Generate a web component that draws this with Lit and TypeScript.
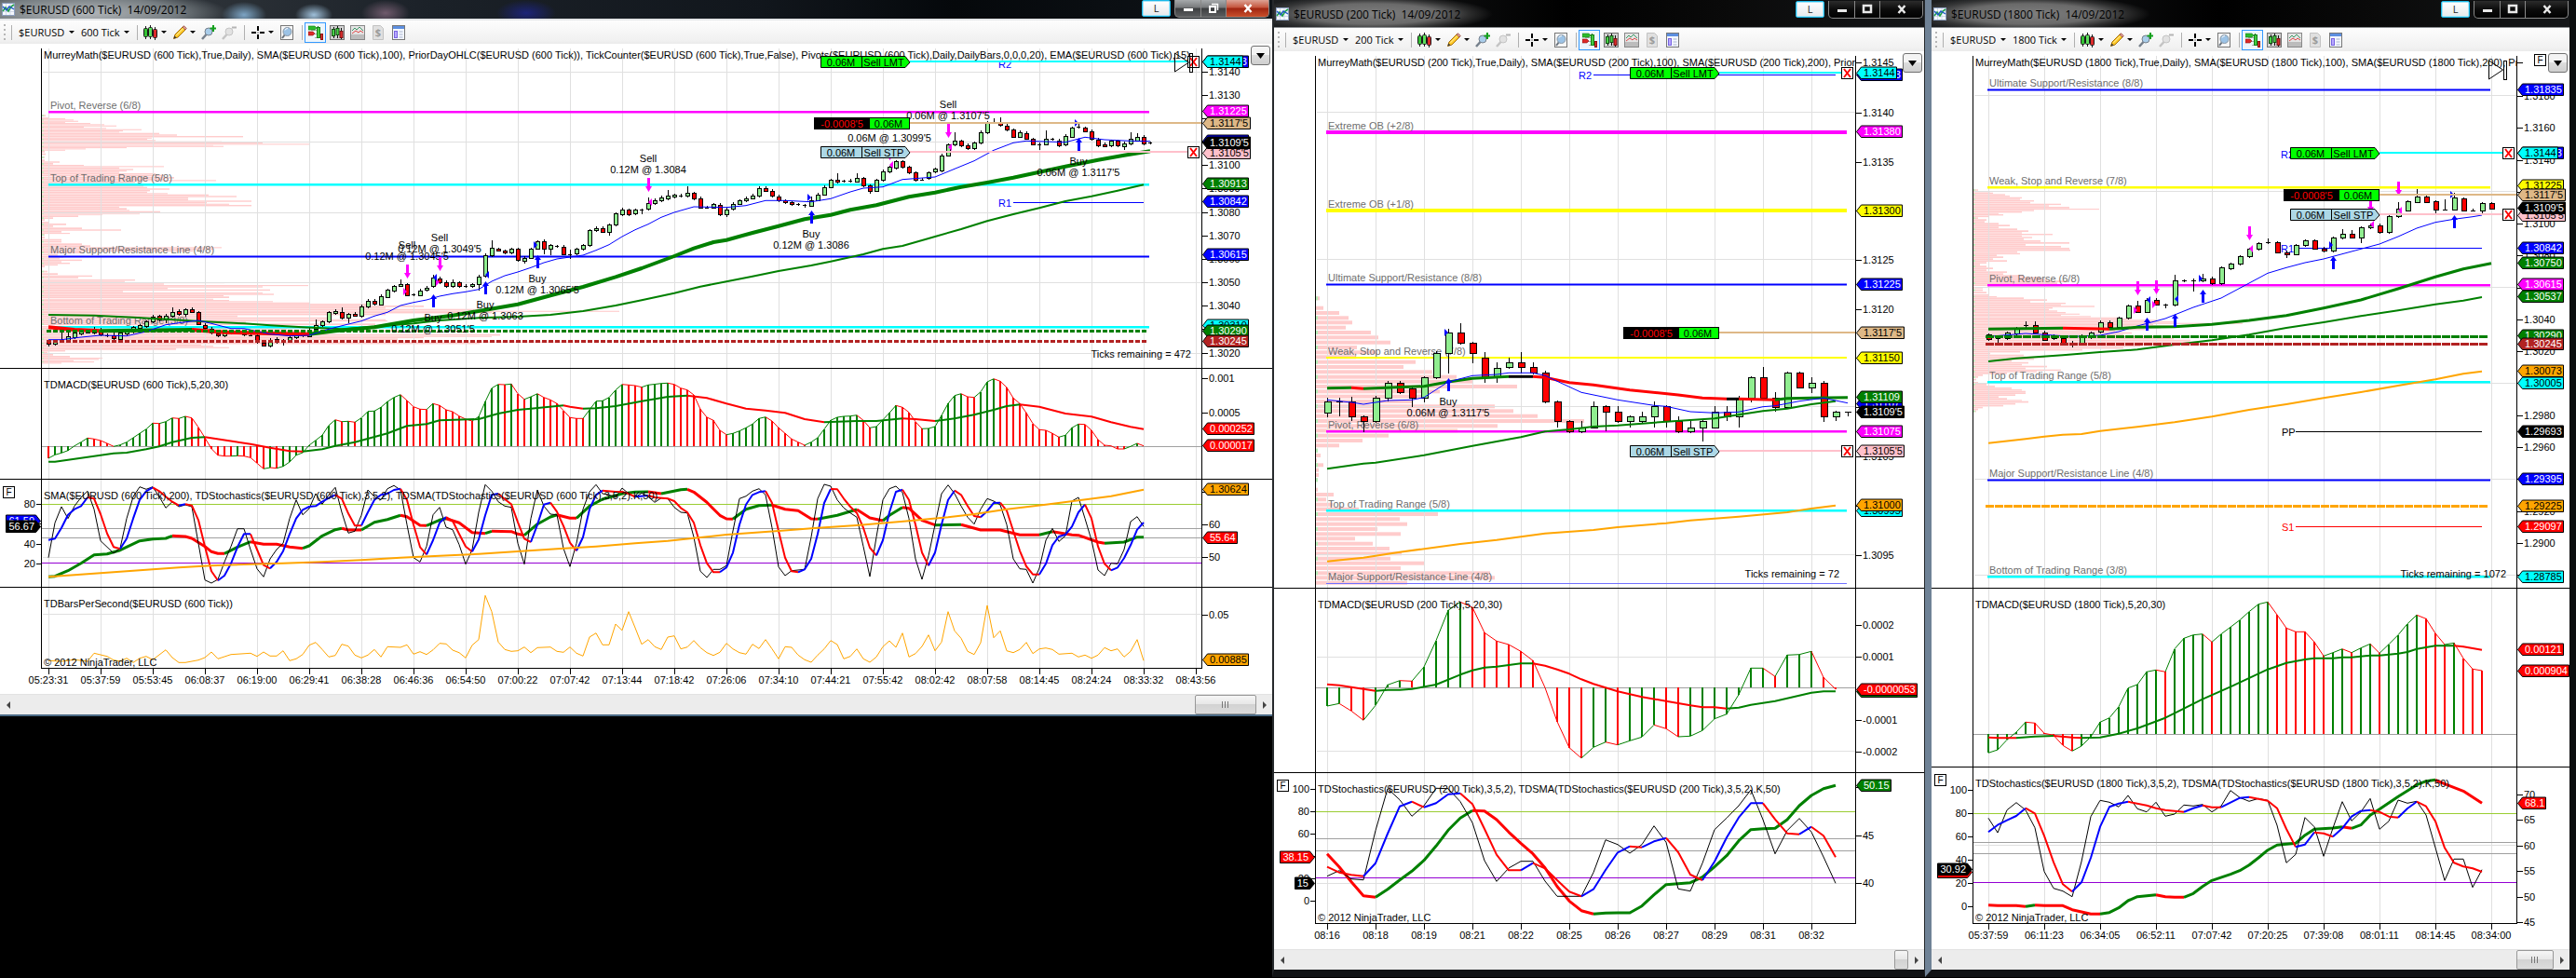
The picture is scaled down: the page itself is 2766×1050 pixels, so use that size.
import { LitElement, html, svg, css, nothing } from "lit";
import { customElement, property } from "lit/decorators.js";

/* Vertical chart data is stored in thirds of a pixel; horizontal data is keyed by bar index. */

type Pair = [number, number];
interface Series { data: string; up: string; down?: string; w: number; off?: number }
interface Level { y: number; color: string; size: number; label?: string; dash?: string }
interface Tag { y: number; text: string; bg: string; fg?: string }
interface Order { y: number; kind: "limit" | "stop" | "position" }
interface Trade { bar: number; y: number; side: "buy" | "sell"; text?: string; head?: boolean }
interface Fill { bar: number; y: number; dir: 1 | -1; color: string }
interface Pivot { y: number; text: string; color: string; x: number; from: number; to: number; drawn?: boolean }
interface Pane {
  top: number;
  bottom: number;
  off: number;
  title: string;
  titleY: number;
  grid: number[];
  ticks: [number, string][];
  leftTicks?: [number, string][];
  tags: Tag[];
  leftTags?: Tag[];
  rules?: { y: number; color: string }[];
  hist?: { zero: number; data: string; first: string };
  series: Series[];
  profile?: { data: string; k: number; x: number; h?: number };
  candles?: { data: string; off: number };
  levels?: Level[];
  levelsOver?: Level[];
  orders?: Order[];
  trades?: Trade[];
  fills?: Fill[];
  pivots?: Pivot[];
  ticksLeft?: { text: string; x: number; y: number };
  marker?: { x: number; y: number };
  badge?: boolean;
  copyright?: number;
}
interface Chart {
  id: string;
  tick: string;
  active: boolean;
  x: number;
  width: number;
  left: number;
  right: number;
  bar0: number;
  step: number;
  body: number;
  gridEvery: number;
  times: string[];
  levelFrom: number;
  levelTo: number;
  orderTip: number;
  thumb: number;
  topBadge?: boolean;
  panes: Pane[];
}

const GREEN = "#008000";
const RED = "#ff0000";
const BLUE = "#0000ff";
const CYAN = "#00ffff";
const MAGENTA = "#ff00ff";
const YELLOW = "#ffff00";
const ORANGE = "#ffa500";
const BROWN = "#b22222";
const TAN = "#deb887";
const PINK = "#ffc0cb";
const GRID = "#e0e0e0";

const pairs = (s: string): Pair[] =>
  s.trim().split(/\s+/).map((t) => t.split(":").map(Number) as Pair);

const textWidth = (s: string) =>
  [...s].reduce((w, c) => w + (c === "." ? 3.06 : c === "'" ? 2.1 : c === "-" ? 3.66 : 6.12), 0);

/* ---------------------------------------------------------------- data */

const chart600: Chart = {
  id: "w600", tick: "600 Tick", active: true,
  x: 0, width: 1366, left: 44, right: 1290, bar0: 52, step: 7, body: 4, gridEvery: 8,
  times: ["05:23:31", "05:37:59", "05:53:45", "06:08:37", "06:19:00", "06:29:41", "06:38:28", "06:46:36", "06:54:50", "07:00:22", "07:07:42", "07:13:44", "07:18:42", "07:26:06", "07:34:10", "07:44:21", "07:55:42", "08:02:42", "08:07:58", "08:14:45", "08:24:24", "08:33:32", "08:43:56"],
  levelFrom: 52, levelTo: 1234, orderTip: 977, thumb: 66,
  panes: [
    {
      top: 47, bottom: 395, off: 0, titleY: 178,
      title: "MurreyMath($EURUSD (600 Tick),True,Daily), SMA($EURUSD (600 Tick),100), PriorDayOHLC($EURUSD (600 Tick)), TickCounter($EURUSD (600 Tick),True,False), Pivots($EURUSD (600 Tick),Daily,DailyBars,0,0,0,20), EMA($EURUSD (600 Tick),15)",
      grid: [230, 455, 683, 908, 1136],
      ticks: [[231, "1.3140"], [306, "1.3130"], [381, "1.3120"], [456, "1.3110"], [531, "1.3100"], [607, "1.3090"], [684, "1.3080"], [758, "1.3070"], [833, "1.3060"], [908, "1.3050"], [983, "1.3040"], [1060, "1.3030"], [1137, "1.3020"]],
      tags: [
        { y: 199, text: "1.31443", bg: BLUE, fg: "#fff" }, { y: 199, text: "1.3144", bg: CYAN },
        { y: 358, text: "1.31225", bg: MAGENTA, fg: "#fff" }, { y: 397, text: "1.3117'5", bg: TAN },
        { y: 491, text: "1.3105'5", bg: PINK }, { y: 454, text: "1.31105", bg: BLUE, fg: "#fff" },
        { y: 460, text: "1.3109'5", bg: "#000", fg: "#fff" }, { y: 592, text: "1.30913", bg: GREEN, fg: "#fff" },
        { y: 647, text: "1.30842", bg: BLUE, fg: "#fff" }, { y: 819, text: "1.30615", bg: BLUE, fg: "#fff" },
        { y: 1048, text: "1.30310", bg: CYAN }, { y: 1065, text: "1.30290", bg: GREEN, fg: "#fff" },
        { y: 1098, text: "1.30245", bg: BROWN, fg: "#fff" },
      ],
      profile: {
        k: 2.2725, x: 0,
        data: "370:112 378:119 381:158 385:180 389:190 393:158 396:220 400:255 404:283 408:205 412:258 416:346 420:300 424:290 428:388 433:432 438:594 443:370 447:360 451:380 455:540 459:640 463:757 467:520 470:545 474:310 478:210 482:158 486:108 494:112 504:110 514:108 520:145 525:130 531:205 535:400 539:290 544:325 549:310 553:290 558:380 563:400 570:425 576:400 580:527 584:330 590:325 596:350 602:360 607:413 612:365 617:360 622:408 626:510 631:578 636:458 641:460 646:613 651:505 656:560 660:613 665:290 670:310 676:316 680:392 685:300 688:340 691:250 694:192 700:130 706:110 714:120 720:162 726:130 733:200 739:295 744:150 750:170 754:110 762:108 770:150 776:150 784:200 790:220 796:540 800:520 806:470 811:200 818:140 825:155 832:145 836:200 841:150 846:170 851:140 856:110 872:115 880:140 887:225 892:190 900:330 905:305 909:548 913:400 918:753 922:640 927:410 932:658 937:300 942:640 946:668 951:545 955:560 962:520 966:560 970:665 974:755 978:905 984:1033 990:940 995:1185 1001:1511 1005:1200 1010:940 1016:580 1022:800 1028:940 1032:945 1036:600 1042:915 1050:700 1056:900 1060:700 1064:1030 1070:720 1076:1220 1082:1200 1086:1035 1090:970 1096:640 1100:1400 1104:1170 1109:490 1113:520 1118:560 1122:430 1128:160 1133:115 1140:130 1146:170 1152:250 1156:240 1160:180 1164:230 1168:150 1172:102",
      },
      levels: [
        { y: 361, color: MAGENTA, size: 3, label: "Pivot, Reverse (6/8)" },
        { y: 593, color: CYAN, size: 3, label: "Top of Trading Range (5/8)" },
        { y: 824, color: BLUE, size: 3, label: "Major Support/Resistance Line (4/8)" },
        { y: 1052, color: CYAN, size: 3, label: "Bottom of Trading Range (3/8)" },
      ],
      levelsOver: [
        { y: 1066, color: GREEN, size: 3, dash: "5 2" },
        { y: 1099, color: BROWN, size: 3, dash: "5 2" },
      ],
      candles: {
        off: 0,
        data: `r1098-1108^1094_1116 g1102-1108 d1097^1070_1098 g1084-1094^1070 g1072-1086 g1066-1074 g1064-1070 g1060-1072^1052 r1062-1078^1055 d1080 r1080-1090^1070 g1072-1092 g1068-1074 g1054-1068 g1048-1056 g1036-1050 g1020-1036 r1018-1030 g1018-1030^1010_1040 g1004-1018^990 r1002-1012 g996-1012^993_1020 r997-1004^990 r1006-1043 r1046-1056 r1058-1072 r1074-1080 g1072-1080 g1066-1072 d1066 r1068-1078 d1079 r1080-1102 r1104-1112 g1094-1112_1118 r1092-1102 d1102^1092_1114 g1086-1096_1100 g1078-1086 g1074-1080 g1062-1082 g1048-1060^1030 g1036-1048 g1006-1036 g1002-1008 r1004-1024^990 g1012-1024_1040 r1010-1016 g986-1018^980 g968-988^962 r968-978 g954-980 g934-956 g922-936 g916-920^900 r916-950 d949 g936-950 g926-934 g894-922^886 r896-910 r908-922 g908-922^900 r910-922 d921 g916-921 g890-916_935 g822-888 g798-822^774 r802-806 r808-814 g802-814 r802-838 g830-840_850 g802-830 g778-800 r778-802^772_818 g790-802_822 d793 r794-818 d818^805_834 g802-816 g790-802 g742-790 g734-742 r734-746 g724-746_760 g688-724 g676-690^668 r676-690 g676-688 d676^672_690 g654-672^636 g644-654 g636-646 g630-640^612 g628-634 d630 g622-630^600 r622-640 r638-668 d668 g658-668 r660-690 g674-690_698 g656-672 g646-656 g638-646 g630-638 g606-630 r606-614 r614-630 r632-646 r646-652 r652-658 d658 d660^656_670 g644-662^634 g626-644 g602-626 g580-602 r580-586^558 d583 d582 g574-584^558 r574-598 r598-614_624 g580-614 g552-580 g538-552 g520-540 r520-538 r538-556 r556-580 d578 g556-574 g544-552 g500-550 g466-500 g454-466^426 r454-468 r468-478 g460-478 g426-460 g396-426 d392^380 r392-402^378 r404-418 r418-440 g426-440 r428-446 r448-464 d464^460_484 g448-464^420 d448 r452-468_474 g438-466 g412-440 d408^392 r412-422 r422-448 r450-468 r464-470 g454-468 r454-468 g462-470_482 g448-462^426 g440-452^428 r440-462 d460`,
      },
      series: [
        { up: GREEN, w: 2, data: "0:1014 7:1016 13:1022 18:1028 24:1036 30:1042 34:1048 39:1054 45:1060 50:1052 56:1042 60:1032 66:1024 72:1020 77:1014 82:1002 87:984 91:967 96:944 100:923 104:907 108:890 112:873 117:855 120:842 125:819 128:802 131:792 136:762 140:738 144:712 148:690 152:670 156:648 160:632 164:614 168:595" },
        { up: GREEN, down: RED, w: 4, data: "0:1054 4:1062 8:1066 14:1064 22:1062 27:1070 34:1074 40:1076 44:1066 50:1054 56:1032 62:1016 67:998 72:980 77:952 82:924 87:892 91:864 96:825 99:800 102:780 104:773 108:750 112:728 116:706 120:692 123:676 127:661 132:634 136:620 140:602 144:588 148:572 152:554 156:536 161:515 165:500 169:487" },
        { up: BLUE, w: 1, data: "0:1094 2:1094 5:1086 8:1080 12:1082 15:1068 18:1046 20:1040 23:1032 25:1042 28:1058 30:1058 34:1076 37:1082 40:1080 43:1060 46:1044 48:1034 50:1018 52:1006 54:984 56:974 58:966 60:954 62:946 64:940 66:932 68:906 70:888 72:876 74:862 76:846 78:834 80:828 82:822 84:806 86:788 88:762 90:740 92:722 94:700 96:684 99:666 104:668 107:662 110:646 113:646 117:650 120:640 123:618 125:606 128:602 131:578 136:570 139:544 142:518 145:484 148:460 150:454 153:456 156:458 159:442 162:450 166:454 169:455" },
      ],
      pivots: [
        { y: 205, text: "R2", color: BLUE, x: 1072, from: 1089, to: 1228, drawn: false },
        { y: 650, text: "R1", color: BLUE, x: 1072, from: 1088, to: 1228 },
      ],
      orders: [{ y: 199, kind: "limit" }, { y: 396, kind: "position" }, { y: 489, kind: "stop" }],
      trades: [
        { bar: 55, y: 853, side: "sell", text: "0.12M @ 1.3045'5" },
        { bar: 60, y: 829, side: "sell", text: "0.12M @ 1.3049'5" },
        { bar: 92, y: 574, side: "sell", text: "0.12M @ 1.3084" },
        { bar: 138, y: 400, side: "sell", text: "0.06M @ 1.3107'5" },
        { bar: 129, y: 471, side: "sell", text: "0.06M @ 1.3099'5", head: false },
        { bar: 59, y: 948, side: "buy", text: "0.12M @ 1.3051'5" },
        { bar: 67, y: 906, side: "buy", text: "0.12M @ 1.3063" },
        { bar: 75, y: 822, side: "buy", text: "0.12M @ 1.3065'5" },
        { bar: 117, y: 678, side: "buy", text: "0.12M @ 1.3086" },
        { bar: 158, y: 444, side: "buy", text: "0.06M @ 1.3117'5" },
      ],
      fills: [
        { bar: 55, y: 940, dir: 1, color: MAGENTA }, { bar: 60, y: 908, dir: 1, color: MAGENTA },
        { bar: 59, y: 893, dir: -1, color: BLUE }, { bar: 67, y: 886, dir: -1, color: BLUE },
        { bar: 75, y: 790, dir: 1, color: BLUE }, { bar: 92, y: 652, dir: -1, color: MAGENTA },
        { bar: 117, y: 637, dir: 1, color: BLUE }, { bar: 129, y: 532, dir: -1, color: MAGENTA },
        { bar: 138, y: 474, dir: -1, color: MAGENTA }, { bar: 158, y: 397, dir: 1, color: BLUE },
      ],
      marker: { x: 1261, y: 57 },
      ticksLeft: { text: "Ticks remaining = 472", x: 1279, y: 1141 },
    },
    {
      top: 395, bottom: 514, off: 1170, titleY: 70, title: "TDMACD($EURUSD (600 Tick),5,20,30)",
      grid: [], ticks: [[48, "0.001"], [158, "0.0005"]],
      tags: [{ y: 211, text: "0.000252", bg: RED, fg: "#fff" }, { y: 265, text: "0.000017", bg: RED, fg: "#fff" }],
      rules: [{ y: 268, color: "#a0a0a0" }],
      hist: {
        zero: 268, first: RED,
        data: "0:306 1:295 2:289 3:281 4:266 5:254 6:241 7:244 8:249 9:258 10:268 11:263 12:254 13:240 14:226 15:212 16:193 17:194 18:188 19:176 20:178 21:171 22:176 23:206 24:240 25:275 26:296 27:299 28:299 29:298 30:299 31:304 32:322 33:340 34:336 35:338 36:332 37:318 38:296 39:288 40:264 41:248 42:232 43:200 44:182 45:188 46:187 47:190 48:176 49:155 50:154 51:142 52:124 53:110 54:101 55:120 56:140 57:148 58:149 59:130 60:136 61:150 62:156 63:170 64:180 65:186 66:172 67:124 68:80 69:68 70:69 71:67 72:98 73:116 74:108 75:98 76:110 77:118 78:130 79:152 80:175 81:178 82:178 83:150 84:122 85:121 86:110 87:86 88:68 90:72 91:77 92:70 94:65 95:64 96:68 97:80 98:86 99:102 100:148 101:174 102:184 103:216 104:230 105:226 106:218 107:208 108:196 109:178 110:173 111:186 112:208 113:226 114:244 115:254 116:264 117:254 118:240 119:212 120:184 121:174 122:171 123:170 124:167 125:184 126:208 127:204 128:182 129:160 130:136 131:142 132:158 133:188 134:211 135:210 136:204 137:168 138:130 139:104 140:98 141:108 142:110 143:92 144:60 145:50 146:58 147:78 148:112 149:130 150:160 151:194 152:214 153:216 154:226 155:238 156:232 157:208 158:196 159:197 160:216 161:246 162:264 163:266 164:276 165:276 166:268 167:258 168:266",
      },
      series: [{ up: GREEN, down: RED, w: 2, data: "0:317 1:317 10:290 12:288 15:277 17:268 19:254 22:240 24:238 31:260 34:272 37:283 39:284 42:277 44:266 47:254 52:226 55:202 58:196 60:184 66:180 69:162 72:150 74:146 79:136 80:140 82:146 84:145 87:138 91:122 95:108 98:104 101:112 104:130 107:146 110:152 113:160 116:180 119:190 124:186 127:186 131:178 133:180 136:186 139:178 142:166 145:150 147:138 149:133 152:140 156:162 160:172 163:190 166:205 168:212" }],
    },
    {
      top: 514, bottom: 630, off: 1170, titleY: 427,
      title: "SMA($EURUSD (600 Tick),200), TDStochastics($EURUSD (600 Tick),3,5,2), TDSMA(TDStochastics($EURUSD (600 Tick),3,5,2).K,50)",
      grid: [623], ticks: [[413, ""], [518, "60"], [623, "50"]],
      leftTicks: [[452, "80"], [516, ""], [581, "40"], [645, "20"]],
      tags: [{ y: 405, text: "1.30624", bg: ORANGE }, { y: 561, text: "55.64", bg: RED, fg: "#fff" }],
      leftTags: [{ y: 508, text: "61.59", bg: BLUE, fg: "#fff" }, { y: 526, text: "56.67", bg: "#000", fg: "#fff" }],
      rules: [{ y: 452, color: "#9acd32" }, { y: 532, color: "#a0a0a0" }, { y: 562, color: "#a0a0a0" }, { y: 643, color: "#9400d3" }],
      series: [
        { up: GREEN, down: RED, w: 3, data: "0:688 1:686 3:668 5:644 7:617 9:614 11:602 14:572 16:566 18:564 19:556 21:558 22:564 24:590 25:607 26:613 27:613 29:592 31:575 33:583 35:583 37:592 39:596 40:588 42:556 44:536 45:532 46:537 48:537 50:512 52:503 54:490 55:494 57:522 58:523 60:505 61:500 63:514 65:545 67:548 68:541 71:542 72:550 73:554 75:518 77:495 78:488 80:499 81:499 83:460 85:438 88:420 90:415 92:414 94:420 97:407 98:406 99:415 101:448 103:490 104:501 105:502 107:470 109:458 111:457 113:470 115:475 117:501 118:502 121:490 124:471 126:498 128:507 129:490 131:464 132:467 134:506 136:521 140:520 143:537 146:537 149:553 152:553 154:542 157:553 158:554 161:576 162:580 165:576 167:560 168:560" },
        { up: "#000", w: 1, data: "0:626 1:514 2:462 3:500 4:460 5:432 6:412 7:470 8:572 9:592 10:612 11:596 12:500 13:430 14:398 15:406 16:398 17:430 18:466 19:446 20:462 21:456 22:462 23:580 24:698 25:708 26:696 27:640 28:590 29:533 30:533 31:600 32:662 33:688 34:630 35:600 36:580 37:500 38:440 39:488 40:468 41:420 42:454 43:424 44:400 45:480 46:547 47:541 48:490 49:408 50:430 51:440 52:404 53:394 54:408 55:520 56:626 57:640 58:590 59:488 60:464 61:528 62:536 63:584 64:647 65:600 66:480 67:391 68:412 69:446 70:460 71:464 72:580 73:647 74:500 75:408 76:460 77:486 78:488 79:596 80:655 81:580 82:470 83:414 84:391 85:420 86:424 87:432 88:402 89:420 90:432 91:418 92:430 93:448 94:434 95:436 96:464 97:480 98:482 99:560 100:670 101:690 102:664 103:664 104:652 105:540 106:436 107:428 108:412 109:404 110:424 111:530 112:656 113:684 114:668 115:666 116:664 117:560 118:436 119:390 120:396 121:440 122:466 123:482 124:496 125:590 126:687 127:560 128:440 129:404 130:396 131:416 132:500 133:630 134:696 135:620 136:520 137:420 138:392 139:420 140:460 141:496 142:518 143:470 144:436 145:444 146:456 147:520 148:630 149:662 150:664 151:708 152:660 153:570 154:532 155:574 156:556 157:444 158:432 159:500 160:570 161:666 162:684 163:644 164:646 165:600 166:510 167:494 168:526" },
        { up: BLUE, down: RED, w: 2, data: "0:569 1:565 2:530 3:488 4:470 5:460 6:432 7:436 8:486 9:548 10:592 11:598 12:565 13:500 14:440 15:412 16:400 17:412 18:430 19:446 20:458 21:454 22:458 23:505 24:590 25:670 26:700 27:684 28:645 29:592 30:550 31:550 32:600 33:650 34:661 35:640 36:605 37:550 38:500 39:472 40:462 41:460 42:446 43:434 44:424 45:436 46:484 47:523 48:523 49:480 50:440 51:424 52:420 53:408 54:404 55:440 56:520 57:592 58:616 59:570 60:514 61:495 62:508 63:550 64:590 65:607 66:568 67:490 68:424 69:420 70:438 71:454 72:512 73:565 74:576 75:520 76:455 77:449 78:478 79:524 80:578 81:604 82:560 83:470 84:424 85:410 87:414 88:414 89:420 90:430 92:426 93:432 95:436 96:444 97:466 98:480 99:514 100:586 101:644 102:673 103:673 104:658 105:610 106:520 107:455 108:424 109:415 110:412 111:450 112:540 113:626 114:670 115:673 116:664 117:630 118:550 119:450 120:405 121:406 122:436 123:462 124:482 125:530 126:594 127:619 128:570 129:480 130:414 131:407 132:440 133:520 134:610 135:652 136:610 137:520 138:440 139:410 140:424 141:460 142:492 143:496 144:476 145:450 146:449 147:475 148:540 149:604 150:654 151:680 152:680 153:646 154:586 155:558 156:552 157:526 158:480 159:455 160:500 161:590 162:646 163:667 164:658 165:628 166:586 167:536 168:513" },
        { up: ORANGE, w: 2, data: "0:688 5:680 10:673 15:665 20:658 25:652 30:648 36:644 42:640 48:634 54:626 60:620 66:614 72:606 78:598 84:590 90:580 95:572 104:552 112:540 118:530 124:522 132:508 138:496 142:486 147:470 153:455 158:442 163:428 168:407" },
      ],
      badge: true,
    },
    {
      top: 630, bottom: 717, off: 1170, titleY: 775, title: "TDBarsPerSecond($EURUSD (600 Tick))",
      grid: [808], ticks: [[810, "0.05"]], tags: [{ y: 954, text: "0.00885", bg: ORANGE }],
      series: [{ up: ORANGE, w: 1, data: "0:958 2:960 4:955 6:960 7:934 9:944 10:956 11:960 12:950 13:964 14:950 15:944 16:955 18:923 19:948 20:964 21:964 23:956 24:948 25:930 26:952 28:938 31:934 32:944 33:930 34:943 35:943 36:926 37:958 38:952 39:938 40:908 41:899 42:922 43:946 44:941 45:905 46:911 47:940 48:949 49:940 50:922 51:946 52:913 54:915 55:907 56:937 57:929 58:938 59:923 60:902 61:904 62:924 63:932 64:949 65:908 66:890 67:748 68:800 69:898 70:922 71:928 72:926 73:914 74:932 75:916 77:914 78:928 79:931 80:914 81:934 82:943 83:882 84:869 85:907 86:907 87:840 88:860 89:800 90:852 91:905 92:890 93:913 94:922 95:882 96:878 97:920 98:914 99:893 100:916 101:932 102:941 103:931 104:902 105:920 106:932 107:937 108:905 109:919 110:890 111:920 112:952 113:913 114:915 115:940 116:955 117:963 118:940 119:920 120:893 121:906 122:952 123:944 124:920 125:952 126:963 127:946 128:913 129:894 130:915 131:869 132:946 133:935 134:912 135:875 136:926 137:898 138:800 139:862 140:886 141:928 142:938 143:900 144:780 145:884 146:862 147:926 148:932 149:922 150:899 151:935 152:920 153:917 154:922 155:937 157:934 158:946 159:940 160:950 161:940 162:916 163:926 164:920 165:946 166:928 167:890 168:958" }],
      copyright: 964,
    },
  ],
};

const chart200: Chart = {
  id: "w200", tick: "200 Tick", active: false,
  x: 1368, width: 698, left: 1412, right: 1992, bar0: 1425, step: 13, body: 7, gridEvery: 4,
  times: ["08:16", "08:18", "08:19", "08:21", "08:22", "08:25", "08:26", "08:27", "08:29", "08:31", "08:32"],
  levelFrom: 1424, levelTo: 1983, orderTip: 1846, thumb: 15,
  panes: [
    {
      top: 55, bottom: 631, off: 0, titleY: 202,
      title: "MurreyMath($EURUSD (200 Tick),True,Daily), SMA($EURUSD (200 Tick),100), SMA($EURUSD (200 Tick),200), PriorDayOHLC($EURUSD (200 Tick))",
      grid: [361, 835, 1309, 1786],
      ticks: [[202, "1.3145"], [363, "1.3140"], [521, "1.3135"], [679, "1.3130"], [837, "1.3125"], [995, "1.3120"], [1153, "1.3115"], [1311, "1.3110"], [1470, "1.3105"], [1628, "1.3100"], [1787, "1.3095"]],
      tags: [
        { y: 241, text: "1.31443", bg: BLUE, fg: "#fff" }, { y: 235, text: "1.3144", bg: CYAN },
        { y: 423, text: "1.31380", bg: MAGENTA, fg: "#fff" }, { y: 678, text: "1.31300", bg: YELLOW },
        { y: 915, text: "1.31225", bg: BLUE, fg: "#fff" }, { y: 1071, text: "1.3117'5", bg: TAN },
        { y: 1152, text: "1.31150", bg: YELLOW }, { y: 1298, text: "1.31107", bg: BLUE, fg: "#fff" },
        { y: 1279, text: "1.31109", bg: GREEN, fg: "#fff" }, { y: 1326, text: "1.3109'5", bg: "#000", fg: "#fff" },
        { y: 1389, text: "1.31075", bg: MAGENTA, fg: "#fff" }, { y: 1453, text: "1.3105'5", bg: PINK },
        { y: 1643, text: "1.30995", bg: CYAN }, { y: 1626, text: "1.31000", bg: ORANGE },
      ],
      profile: {
        k: 2.221, x: 1366, h: 12,
        data: "955:113 986:122 1002:160 1018:182 1033:191 1049:175 1065:235 1081:253 1097:282 1113:202 1129:250 1144:200 1160:342 1176:313 1192:382 1208:440 1223:480 1239:584 1255:400 1271:370 1287:335 1303:530 1318:575 1334:632 1350:744 1366:537 1381:441 1397:278 1413:215 1429:160 1445:108 1461:115 1477:107 1492:122 1508:112 1524:111 1540:109 1571:109 1587:147 1603:129 1619:145 1634:207 1650:395 1666:304 1682:322 1698:251 1714:306 1729:198 1745:240 1761:280 1777:309 1793:282 1808:362 1824:306 1840:520 1855:530 1871:322 1887:103",
      },
      levels: [
        { y: 427, color: MAGENTA, size: 4, label: "Extreme OB (+2/8)" },
        { y: 679, color: YELLOW, size: 4, label: "Extreme OB (+1/8)" },
        { y: 916, color: BLUE, size: 3, label: "Ultimate Support/Resistance (8/8)" },
        { y: 1153, color: YELLOW, size: 2, label: "Weak, Stop and Reverse (7/8)" },
        { y: 1390, color: MAGENTA, size: 3, label: "Pivot, Reverse (6/8)" },
        { y: 1645, color: CYAN, size: 3, label: "Top of Trading Range (5/8)" },
        { y: 1879, color: "#7070ff", size: 1, label: "Major Support/Resistance Line (4/8)" },
      ],
      candles: {
        off: 1170,
        data: `g124-158^110_174 d124^110_172 r124-172^108_186 r172-187_222 g110-187 g62-110_124 r62-94 r80-110_140 g46-110_126 g-34-46 g-98--34^-110_32 r-98--65^-130 r-65--34_0 r-17-46^-36_62 g14-46^-2_62 g-2-13^-18 r-2-13^-36_32 r13-30^-2 r30-124 r124-187_206 r187-220 g206-220^187 g139-206^124 r139-157_220 r157-187^139 g172-187_206 g172-187^157 g139-172^124_206 r139-187_206 r187-220^172 g206-220^187 g187-206_252 g157-206^139 r157-172^139_187 g110-172_206 g46-110_126 r46-110^12 r110-140^94_157 g31-140 r31-77 g62-77^46_95 r62-172_188 g157-172_187 d157^155_172`,
      },
      series: [
        { off: 1170, up: GREEN, down: RED, w: 3, data: "0:80 2:79 3:82 8:74 10:60 12:49 15:43" },
        { off: 1170, up: "#000", w: 3, data: "15:43 17:43" },
        { off: 1170, up: RED, w: 3, data: "17:43 18:46 20:62 22:70 25:86 29:102 31:112 33:115" },
        { off: 1170, up: "#000", w: 3, data: "33:115 34:115" },
        { off: 1170, up: RED, w: 3, data: "34:115 37:118" },
        { off: 1170, up: GREEN, w: 3, data: "37:118 38:113 40:112 43:110" },
        { off: 1170, up: GREEN, w: 2, data: "0:340 3:323 4:320 8:296 12:266 16:238 18:220 20:213 22:204 24:200 28:188 32:178 36:154 38:146 40:132 42:122" },
        { off: 1170, up: BLUE, w: 1, data: "0:118 2:126 3:132 5:120 7:118 8:110 10:60 12:40 14:36 15:31 17:31 18:40 20:76 21:94 24:118 27:136 28:139 30:156 32:160 34:157 36:140 37:137 39:122 41:112 42:120 43:128" },
        { off: 1170, up: ORANGE, w: 2, data: "0:638 3:626 6:608 11:582 14:569 18:548 22:537 24:528 28:515 30:506 34:494 38:480 40:468 42:458" },
      ],
      pivots: [{ y: 241, text: "R2", color: BLUE, x: 1695, from: 1711, to: 1971 }],
      orders: [{ y: 235, kind: "limit" }, { y: 1072, kind: "position" }, { y: 1452, kind: "stop" }],
      trades: [{ bar: 10, y: 1218, side: "buy", text: "0.06M @ 1.3117'5" }],
      fills: [{ bar: 10, y: 1072, dir: 1, color: BLUE }],
      ticksLeft: { text: "Ticks remaining = 72", x: 1975, y: 1849 },
    },
    {
      top: 631, bottom: 829, off: 1860, titleY: 88, title: "TDMACD($EURUSD (200 Tick),5,20,30)",
      grid: [254, 559], ticks: [[153, "0.0002"], [254, "0.0001"], [459, "-0.0001"], [560, "-0.0002"]],
      tags: [{ y: 366, text: "-0.0000053", bg: GREEN }, { y: 360, text: "-0.0000053", bg: RED, fg: "#fff" }],
      rules: [{ y: 355, color: "#a0a0a0" }],
      hist: {
        zero: 355, first: GREEN,
        data: "0:414 1:406 2:430 3:460 4:412 5:346 6:332 7:334 8:288 9:203 10:106 11:79 12:96 13:178 14:205 15:216 16:238 17:268 18:355 19:464 20:548 21:582 22:547 23:530 24:539 25:526 26:514 27:475 28:487 29:513 30:511 31:493 32:455 33:440 34:377 35:292 36:292 37:319 38:250 39:248 40:238 41:322 42:360",
      },
      series: [{ up: GREEN, down: RED, w: 2, data: "0:344 1:347 3:359 4:365 5:362 6:362 7:359 9:345 11:313 12:299 13:290 14:287 16:277 17:277 18:284 19:296 20:310 21:328 22:343 24:367 26:385 28:398 30:412 31:418 32:418 33:422 34:419 35:410 37:398 39:380 40:371 41:367 42:367" }],
    },
    {
      top: 829, bottom: 991, off: 1860, titleY: 682,
      title: "TDStochastics($EURUSD (200 Tick),3,5,2), TDSMA(TDStochastics($EURUSD (200 Tick),3,5,2).K,50)",
      grid: [983], ticks: [[676, ""], [830, "45"], [984, "40"]],
      leftTicks: [[681, "100"], [752, "80"], [825, "60"], [896, "40"], [968, "20"], [1041, "0"]],
      tags: [{ y: 669, text: "50.15", bg: GREEN, fg: "#fff" }],
      leftTags: [{ y: 900, text: "38.15", bg: RED, fg: "#fff" }, { y: 985, text: "15", bg: "#000", fg: "#fff" }],
      rules: [{ y: 752, color: "#9acd32" }, { y: 841, color: "#a0a0a0" }, { y: 878, color: "#a0a0a0" }, { y: 967, color: "#9400d3" }],
      series: [
        { up: GREEN, down: RED, w: 3, data: "0:890 1:932 2:980 3:1025 4:1030 5:1004 6:974 7:946 8:911 9:865 10:814 11:775 12:751 13:752 14:780 15:820 16:856 17:890 18:935 19:995 20:1042 21:1073 22:1084 23:1081 24:1080 25:1080 26:1058 27:1022 28:989 29:986 30:983 31:965 32:932 33:896 34:848 35:812 36:809 37:808 38:780 39:735 40:702 41:680 42:670" },
        { up: "#000", w: 1, data: "0:962 1:944 2:971 3:974 4:815 5:680 6:716 7:769 8:735 9:679 10:680 11:722 12:790 13:912 14:979 15:936 16:914 17:914 18:978 19:1027 20:1027 21:1027 22:950 23:845 24:860 25:888 26:860 27:800 28:853 29:1003 30:1010 31:920 32:812 33:775 34:735 35:684 36:780 37:890 38:815 39:776 40:820 41:900 42:985" },
        { up: BLUE, down: RED, w: 2, data: "0:932 1:950 2:958 3:962 4:920 5:825 6:737 7:722 8:740 9:727 10:698 11:695 12:730 13:810 14:893 15:943 16:943 17:920 18:937 19:975 20:1012 21:1027 22:1004 23:942 24:886 25:866 26:869 27:850 28:839 29:885 30:957 31:975 32:915 33:838 34:773 35:727 36:727 37:779 38:824 39:827 40:803 41:832 42:901" },
      ],
      badge: true, copyright: 1096,
    },
  ],
};

const chart1800: Chart = {
  id: "w1800", tick: "1800 Tick", active: false,
  x: 2074, width: 685, left: 2118, right: 2702, bar0: 2135, step: 10, body: 5, gridEvery: 6,
  times: ["05:37:59", "06:11:23", "06:34:05", "06:52:11", "07:07:42", "07:20:25", "07:39:08", "08:01:11", "08:14:45", "08:34:00"],
  levelFrom: 2134, levelTo: 2674, orderTip: 2555, thumb: 40, topBadge: true,
  panes: [
    {
      top: 55, bottom: 631, off: 0, titleY: 202,
      title: "MurreyMath($EURUSD (1800 Tick),True,Daily), SMA($EURUSD (1800 Tick),100), SMA($EURUSD (1800 Tick),200), PriorDayOHLC($EURUSD (1800 Tick))",
      grid: [307, 616, 925, 1234, 1541, 1850],
      ticks: [[202, ""], [310, "1.3180"], [411, "1.3160"], [515, "1.3140"], [617, "1.3120"], [721, "1.3100"], [822, "1.3080"], [926, "1.3060"], [1030, "1.3040"], [1132, "1.3020"], [1234, "1.3000"], [1337, "1.2980"], [1440, "1.2960"], [1542, "1.2940"], [1647, "1.2920"], [1749, "1.2900"], [1851, "1.2880"]],
      tags: [
        { y: 288, text: "1.31835", bg: BLUE, fg: "#fff" }, { y: 493, text: "1.31443", bg: BLUE, fg: "#fff" },
        { y: 492, text: "1.3144", bg: CYAN }, { y: 598, text: "1.31225", bg: YELLOW },
        { y: 627, text: "1.3117'5", bg: TAN }, { y: 692, text: "1.3105'5", bg: PINK },
        { y: 669, text: "1.3109'5", bg: "#000", fg: "#fff" }, { y: 798, text: "1.30842", bg: BLUE, fg: "#fff" },
        { y: 847, text: "1.30750", bg: GREEN, fg: "#fff" }, { y: 915, text: "1.30615", bg: MAGENTA, fg: "#fff" },
        { y: 953, text: "1.30537", bg: GREEN, fg: "#fff" }, { y: 1080, text: "1.30290", bg: GREEN, fg: "#fff" },
        { y: 1107, text: "1.30245", bg: BROWN, fg: "#fff" }, { y: 1194, text: "1.30073", bg: ORANGE },
        { y: 1232, text: "1.30005", bg: CYAN }, { y: 1389, text: "1.29693", bg: "#000", fg: "#fff" },
        { y: 1542, text: "1.29395", bg: BLUE, fg: "#fff" }, { y: 1629, text: "1.29225", bg: ORANGE },
        { y: 1694, text: "1.29097", bg: RED, fg: "#fff" }, { y: 1856, text: "1.28785", bg: CYAN },
      ],
      profile: {
        k: 2.24, x: 2066,
        data: "610:130 615:158 620:165 625:195 630:205 635:235 640:230 645:265 650:255 656:330 661:300 666:350 672:420 676:265 681:235 686:180 690:190 695:155 700:130 706:150 712:145 718:180 724:205 730:180 736:225 742:250 748:235 753:310 758:235 763:260 768:240 774:280 780:350 786:245 792:330 798:350 804:352 809:225 815:230 820:175 826:190 832:165 838:200 844:150 850:135 856:150 862:165 868:150 874:200 880:190 886:240 892:280 898:295 904:345 910:320 916:190 924:140 932:140 940:150 948:155 954:175 958:240 964:295 970:255 975:340 980:330 985:410 990:310 995:300 1000:320 1005:340 1010:375 1014:330 1018:400 1022:465 1026:500 1030:560 1035:605 1040:765 1044:550 1048:605 1053:570 1058:530 1064:460 1070:500 1076:480 1082:550 1088:600 1094:640 1100:660 1106:700 1112:520 1118:480 1124:380 1130:230 1136:160 1142:240 1148:290 1154:265 1160:210 1166:250 1172:235 1178:295 1184:245 1190:330 1195:270 1200:200 1206:140 1212:130 1220:125 1230:130 1236:150 1242:170 1248:210 1254:235 1259:245 1264:245 1270:220 1276:180 1282:200 1288:235 1292:250 1298:220 1304:190 1310:140 1316:130 1322:125 1330:121",
      },
      levels: [
        { y: 289, color: BLUE, size: 3, label: "Ultimate Support/Resistance (8/8)" },
        { y: 604, color: YELLOW, size: 3, label: "Weak, Stop and Reverse (7/8)" },
        { y: 919, color: MAGENTA, size: 3, label: "Pivot, Reverse (6/8)" },
        { y: 1231, color: CYAN, size: 3, label: "Top of Trading Range (5/8)" },
        { y: 1546, color: BLUE, size: 3, label: "Major Support/Resistance Line (4/8)" },
        { y: 1858, color: CYAN, size: 3, label: "Bottom of Trading Range (3/8)" },
      ],
      levelsOver: [
        { y: 1084, color: GREEN, size: 3, dash: "9 1" },
        { y: 1108, color: BROWN, size: 3, dash: "9 1" },
        { y: 1630, color: ORANGE, size: 3, dash: "9 1" },
      ],
      candles: {
        off: 0,
        data: `r1078-1092 d1090_1104 g1072-1090 g1058-1074 d1048^1034_1062 r1048-1070^1034 r1070-1094 g1082-1090 r1088-1106 d1104_1120 g1082-1104_1112 g1072-1086 g1038-1068 r1038-1052 g1024-1052 g985-1024 r985-1004^970 g966-1004 r966-980 d982_992 g902-982^886 d904 d904^898_938 g896-904^882 r896-912 g862-912 g850-864 g826-850 g802-826 g784-802 d781^768 r781-812 r812-818_832 g790-818 g775-790 r775-800 r800-808 g766-808 g754-766^738 r754-764^740 g733-764_782 g725-733 r725-748 g697-748 g672-697^650 g649-677 g633-650^610 r634-650 r649-674_686 d674^642 g637-674^620 r640-677 d677 g655-677_686 r655-671`,
      },
      series: [
        { up: BLUE, w: 1, data: "0:1084 4:1074 6:1078 9:1084 12:1080 14:1068 16:1050 19:1026 22:990 25:960 28:912 30:880 32:862 34:846 36:834 39:810 42:786 44:762 46:735 48:716 50:706 52:698 53:693" },
        { up: GREEN, down: RED, w: 3, data: "0:1060 4:1058 8:1057 13:1060 14:1058 16:1054 20:1052 24:1045 28:1032 32:1016 36:992 40:966 44:930 48:892 51:866 54:848" },
        { up: GREEN, w: 2, data: "0:1164 3:1154 8:1144 12:1134 16:1126 20:1110 24:1096 28:1078 32:1056 36:1038 40:1018 44:1000 48:980 51:968 53:957" },
        { off: 1170, up: ORANGE, w: 2, data: "0:257 4:244 6:236 8:230 10:228 12:218 16:205 20:190 24:172 28:150 32:132 36:112 40:93 44:72 48:52 51:34 53:26" },
      ],
      pivots: [
        { y: 495, text: "R2", color: BLUE, x: 2449, from: 2465, to: 2470, drawn: false },
        { y: 799, text: "R1", color: BLUE, x: 2449, from: 2465, to: 2665 },
        { y: 1390, text: "PP", color: "#000", x: 2450, from: 2465, to: 2665 },
        { y: 1696, text: "S1", color: RED, x: 2450, from: 2465, to: 2665 },
      ],
      orders: [{ y: 492, kind: "limit" }, { y: 627, kind: "position" }, { y: 690, kind: "stop" }],
      trades: [
        { bar: 16, y: 907, side: "sell" }, { bar: 18, y: 902, side: "sell" }, { bar: 28, y: 728, side: "sell" },
        { bar: 41, y: 640, side: "sell" }, { bar: 44, y: 586, side: "sell" },
        { bar: 17, y: 1022, side: "buy" }, { bar: 20, y: 1012, side: "buy" }, { bar: 23, y: 934, side: "buy" },
        { bar: 37, y: 826, side: "buy" }, { bar: 50, y: 692, side: "buy" },
      ],
      fills: [
        { bar: 16, y: 1000, dir: 1, color: MAGENTA }, { bar: 17, y: 966, dir: -1, color: BLUE },
        { bar: 18, y: 980, dir: 1, color: MAGENTA }, { bar: 20, y: 962, dir: -1, color: BLUE },
        { bar: 23, y: 896, dir: 1, color: BLUE }, { bar: 28, y: 800, dir: -1, color: MAGENTA },
        { bar: 37, y: 790, dir: 1, color: BLUE }, { bar: 41, y: 722, dir: -1, color: MAGENTA },
        { bar: 44, y: 679, dir: -1, color: MAGENTA }, { bar: 50, y: 628, dir: 1, color: BLUE },
      ],
      marker: { x: 2672, y: 65 },
      ticksLeft: { text: "Ticks remaining = 1072", x: 2691, y: 1849 },
    },
    {
      top: 631, bottom: 823, off: 1860, titleY: 88, title: "TDMACD($EURUSD (1800 Tick),5,20,30)",
      grid: [], ticks: [],
      tags: [{ y: 231, text: "0.00121", bg: RED, fg: "#fff" }, { y: 300, text: "0.000904", bg: RED, fg: "#fff" }],
      rules: [{ y: 505, color: "#a0a0a0" }],
      hist: {
        zero: 505, first: GREEN,
        data: "0:565 1:555 2:523 3:498 4:466 5:469 6:502 7:508 8:541 9:559 10:543 11:513 12:466 13:452 14:416 15:356 16:345 17:304 18:298 19:304 20:230 21:196 22:185 23:182 24:208 25:182 26:160 27:137 28:110 29:86 30:79 31:120 32:163 33:175 34:175 35:208 36:253 37:242 38:230 39:242 40:227 41:214 42:244 43:215 44:185 45:149 46:121 47:133 48:180 49:216 50:211 51:260 52:295 53:300",
      },
      series: [{ up: GREEN, down: RED, w: 2, data: "0:515 1:517 3:517 5:512 7:510 9:515 10:517 12:515 14:503 16:486 19:452 23:392 26:352 30:296 32:275 34:264 35:260 37:260 38:257 39:257 41:251 42:251 44:245 45:240 46:230 48:220 50:220 51:223 53:233" }],
    },
    {
      top: 823, bottom: 991, off: 1860, titleY: 664,
      title: "TDStochastics($EURUSD (1800 Tick),3,5,2), TDSMA(TDStochastics($EURUSD (1800 Tick),3,5,2).K,50)",
      grid: [862], ticks: [[698, "70"], [779, "65"], [863, "60"], [944, "55"], [1028, "50"], [1111, "45"]],
      leftTicks: [[684, "100"], [759, "80"], [834, "60"], [908, "40"], [983, "20"], [1059, "0"]],
      tags: [{ y: 725, text: "68.1", bg: RED, fg: "#fff" }],
      leftTags: [{ y: 947, text: "29.58", bg: RED, fg: "#fff" }, { y: 940, text: "30.92", bg: "#000", fg: "#fff" }],
      rules: [{ y: 758, color: "#9acd32" }, { y: 851, color: "#a0a0a0" }, { y: 889, color: "#a0a0a0" }, { y: 982, color: "#9400d3" }],
      series: [
        { up: GREEN, down: RED, w: 3, data: "0:1055 1:1057 3:1057 4:1060 5:1055 6:1057 8:1057 9:1070 11:1084 12:1084 13:1079 14:1064 15:1041 16:1028 18:1022 19:1028 20:1030 21:1030 22:1018 23:995 24:976 26:956 27:944 28:926 29:903 30:878 31:862 33:856 34:830 35:811 37:807 38:803 39:808 40:797 41:766 42:746 44:706 46:668 47:656 48:652 49:665 51:688 53:727" },
        { up: "#000", w: 1, data: "0:775 1:822 2:749 3:725 4:749 5:806 6:947 7:1001 8:1010 9:1028 10:915 11:770 12:718 13:724 14:739 15:702 16:745 17:755 18:724 19:769 20:762 21:733 22:736 23:731 24:755 25:736 26:686 27:709 28:721 29:712 30:718 31:798 32:919 33:892 34:773 35:803 36:898 37:807 38:722 39:784 40:755 41:712 42:811 43:785 44:717 45:727 46:721 47:765 48:870 49:976 50:907 51:907 52:998 53:941" },
        { up: BLUE, down: RED, w: 2, data: "0:820 1:797 2:782 3:768 4:743 5:760 6:832 7:917 8:988 9:1012 10:982 11:903 12:803 13:739 14:728 15:722 17:734 18:743 19:749 21:755 22:743 23:734 24:740 25:740 27:710 28:707 30:719 31:743 32:810 33:868 34:860 35:821 36:824 37:835 38:808 39:770 40:752 41:749 42:755 43:770 44:773 45:744 46:722 47:737 48:785 49:871 50:919 51:931 52:937 53:948" },
      ],
      badge: true, copyright: 1096,
    },
  ],
};

/* -------------------------------------------------------------- pane */

@customElement("chart-pane")
export class ChartPane extends LitElement {
  @property({ attribute: false }) chart!: Chart;
  @property({ attribute: false }) pane!: Pane;
  @property({ attribute: false }) index = 0;

  static styles = css`
    :host { display: block; position: relative; }
    svg { display: block; width: 100%; height: auto; font: 11px "Liberation Sans", Arial, sans-serif; }
    .crisp { shape-rendering: crispEdges; }
    .level-label { fill: #6e6e6e; }
    .end { text-anchor: end; }
    .mid { text-anchor: middle; }
    .line { fill: none; stroke-linejoin: round; }
    .badge {
      position: absolute; left: 3px; top: 8px; box-sizing: border-box; width: 13px; height: 13px; padding: 0;
      border: 1px solid #000; background: #fff; font: 10px/11px "Liberation Sans", Arial, sans-serif; color: #000;
    }
    .badge.top { left: auto; right: 25px; top: 3px; }
    .menu {
      position: absolute; right: 2px; top: 2px; box-sizing: border-box; width: 21px; height: 21px; padding: 0;
      display: grid; place-items: center; border: 1px solid #707070; border-radius: 3px;
      background: linear-gradient(#f4f4f4 50%, #dddddd 50%, #cfcfcf);
    }
    .menu svg { width: 9px; height: 6px; }
  `;

  private x = (bar: number) => this.chart.bar0 + this.chart.step * bar;
  private y = (v: number, off = this.pane.off) => Math.round(((v + off) / 3) * 10) / 10;

  private line(s: Series) {
    const pts = pairs(s.data);
    const runs: { color: string; pts: string[] }[] = [];
    let color = s.up;
    pts.forEach(([i, v], n) => {
      const p = `${this.x(i)},${this.y(v, s.off ?? this.pane.off)}`;
      if (n === 0) return void runs.push({ color: "", pts: [p] });
      const d = v - pts[n - 1][1];
      if (s.down && d !== 0) color = d < 0 ? s.up : s.down;
      const last = runs[runs.length - 1];
      if (last.color === "" || last.color === color) {
        last.color = color;
        last.pts.push(p);
      } else runs.push({ color, pts: [last.pts[last.pts.length - 1], p] });
    });
    return runs.map((r) => svg`<polyline class="line" points=${r.pts.join(" ")} stroke=${r.color} stroke-width=${s.w} />`);
  }

  private histogram() {
    const h = this.pane.hist!;
    const key = pairs(h.data);
    const v: number[] = [];
    key.forEach(([i, a], n) => {
      v[i] = a;
      const nx = key[n + 1];
      if (nx) for (let j = i + 1; j < nx[0]; j++) v[j] = a + ((nx[1] - a) * (j - i)) / (nx[0] - i);
    });
    const z = Math.round(this.y(h.zero));
    let color = h.first;
    return v.map((a, i) => {
      if (i && a !== v[i - 1]) color = a < v[i - 1] ? GREEN : RED;
      const py = Math.round(this.y(a));
      return svg`
        <rect class="crisp" x=${this.x(i) - 1} y=${Math.min(py, z)} width="2" height=${Math.abs(py - z)} fill=${color} />
        ${i ? svg`<line x1=${this.x(i - 1)} y1=${this.y(v[i - 1])} x2=${this.x(i)} y2=${this.y(a)} stroke=${color} />` : nothing}`;
    });
  }

  private candles() {
    const c = this.pane.candles!;
    const b = this.chart.body;
    return c.data.trim().split(/\s+/).map((t, i) => {
      const m = /^([rgd])(-?\d+)(?:-(-?\d+))?(?:\^(-?\d+))?(?:_(-?\d+))?$/.exec(t)!;
      const top = +m[2], bottom = m[3] === undefined ? top : +m[3];
      const hi = m[4] === undefined ? top - 5 : +m[4];
      const lo = m[5] === undefined ? bottom + 5 : +m[5];
      const px = (v: number) => Math.round((v + c.off) / 3);
      const cx = this.x(i);
      const left = cx - Math.floor(b / 2);
      return svg`
        <rect x=${cx} y=${px(hi)} width="1" height=${px(lo) - px(hi)} fill="#000" />
        ${m[1] === "d"
          ? svg`<rect x=${left} y=${px(top)} width=${b} height="1" fill="#000" />`
          : svg`<rect x=${left} y=${px(top)} width=${b + 1} height=${Math.max(3, px(bottom) - px(top) + 1)} fill="#000" />
            <rect x=${left + 1} y=${px(top) + 1} width=${b - 1} height=${Math.max(1, px(bottom) - px(top) - 1)} fill=${m[1] === "g" ? "#90ee90" : RED} />`}`;
    });
  }

  private profile() {
    const p = this.pane.profile!;
    const rows = pairs(p.data);
    const l = this.chart.left + 1;
    return rows.slice(0, -1).map(([v, e], n) => {
      const h = p.h ?? Math.min(rows[n + 1][0] - v, 6) * 0.85;
      return svg`<rect x=${l} y=${this.y(v)} width=${Math.max(1, Math.round(p.x + e / p.k) - l)} height=${h / 3} fill="#ffcccc" />
        ${n % 3 === 0 ? svg`<rect x=${l} y=${this.y(v)} width="2" height=${h / 3} fill="#b8f0b8" />` : nothing}`;
    });
  }

  private level(l: Level) {
    const { levelFrom: a, levelTo: b } = this.chart;
    const y = Math.round(this.y(l.y));
    if (l.dash)
      return svg`<line class="crisp" x1=${a - 2} x2=${b - 3} y1=${y + 0.5} y2=${y + 0.5} stroke=${l.color} stroke-width=${l.size} stroke-dasharray=${l.dash} />`;
    const soft = l.size === 3;
    return svg`<g class="crisp">
      <rect x=${a} y=${y - Math.floor(l.size / 2)} width=${b - a} height=${l.size} fill=${l.color} opacity=${soft ? 0.5 : 1} />
      ${soft ? svg`<rect x=${a} y=${y - (l.color === BLUE ? 0 : 1)} width=${b - a} height=${l.color === BLUE ? 1 : 2} fill=${l.color} />` : nothing}
    </g>`;
  }

  private tag(t: Tag) {
    const a = this.chart.right;
    const y = Math.round(this.y(t.y));
    const r = Math.round(a + 10 + textWidth(t.text));
    return svg`<path d="M${a + 1.5} ${y + 0.5} L${a + 6.5} ${y - 6} H${r + 0.5} V${y + 6.5} H${a + 6.5} Z" fill=${t.bg} stroke="#000" />
      <text x=${a + 9} y=${y + 4} fill=${t.fg ?? "#000"}>${t.text}</text>`;
  }

  private leftTag(t: Tag) {
    const a = this.chart.left;
    const y = Math.round(this.y(t.y));
    const l = Math.round(a - 10 - textWidth(t.text));
    return svg`<path d="M${a - 0.5} ${y + 0.5} L${a - 5.5} ${y - 6} H${l + 0.5} V${y + 6.5} H${a - 5.5} Z" fill=${t.bg} stroke="#000" />
      <text class="end" x=${a - 7} y=${y + 4} fill=${t.fg ?? "#000"}>${t.text}</text>`;
  }

  private order(o: Order) {
    const { orderTip: t, right } = this.chart;
    const y = Math.round(this.y(o.y));
    const b = y - 5;
    if (o.kind === "position")
      return svg`
        <rect x=${t} y=${y - 1} width=${right - t} height="2" fill=${TAN} />
        <rect x=${t - 102.5} y=${b - 0.5} width="102" height="12" fill="#000" stroke="#000" />
        <rect x=${t - 43.5} y=${b - 0.5} width="43" height="12" fill="#00ff00" stroke="#000" />
        <text class="mid" x=${t - 73} y=${y + 5} fill=${RED}>-0.0008'5</text>
        <text class="mid" x=${t - 23} y=${y + 5}>0.06M</text>`;
    const lim = o.kind === "limit";
    const bx = right - 14;
    return svg`
      <rect x=${t} y=${y - 1} width=${right - t - 14} height="2" fill=${lim ? CYAN : PINK} />
      <path d="M${t - 95.5} ${b - 0.5} H${t - 5} L${t} ${b + 6} L${t - 5} ${b + 11.5} H${t - 95.5} Z M${t - 51.5} ${b} V${b + 11}"
        fill=${lim ? "#00ff00" : "#add8e6"} stroke="#000" />
      <text class="mid" x=${t - 74} y=${y + 5}>0.06M</text>
      <text class="mid" x=${t - 28} y=${y + 5}>${lim ? "Sell LMT" : "Sell STP"}</text>
      <rect x=${bx - 0.5} y=${b - 0.5} width="12" height="12" fill="#fff" stroke="#000" />
      <path d="M${bx + 2} ${b + 1} L${bx + 9} ${b + 10} M${bx + 9} ${b + 1} L${bx + 2} ${b + 10}" stroke=${RED} stroke-width="2" />`;
  }

  private trade(t: Trade) {
    const x = this.x(t.bar);
    const y = Math.round(this.y(t.y));
    const sell = t.side === "sell";
    const shape = sell
      ? `M${x - 1} ${y} h3 v9 h2 l-3.5 6 l-3.5 -6 h2 Z`
      : `M${x + 0.5} ${y} l3.5 5 h-2 v9 h-3 v-9 h-2 Z`;
    const hy = sell ? y - 17 : y + 29;
    return svg`
      <path d=${shape} fill=${sell ? MAGENTA : BLUE} />
      ${t.text
        ? svg`${t.head === false ? nothing : svg`<text class="mid" x=${x} y=${hy}>${sell ? "Sell" : "Buy"}</text>`}
            <text class="mid" x=${x} y=${hy + 12}>${t.text}</text>`
        : nothing}`;
  }

  private fillMark(f: Fill) {
    const x = this.x(f.bar);
    const y = Math.round(this.y(f.y));
    return svg`<path d="M${x - f.dir * 4} ${y - 4} L${x} ${y} L${x - f.dir * 4} ${y + 4} Z" fill=${f.color} />`;
  }

  render() {
    const { chart: c, pane: p } = this;
    const last = this.index === c.panes.length - 1;
    const first = this.index === 0;
    const axisTop = first ? p.top + 5 : p.top;
    const end = last ? p.bottom + 28 : p.bottom;
    const clip = `${c.id}-${this.index}`;
    const tl = p.ticksLeft;
    return html`
      <svg viewBox="${c.x} ${p.top} ${c.width} ${end - p.top}" role="img" aria-label=${p.title}>
        <clipPath id=${clip}><rect x=${c.left} y=${p.top} width=${c.right - c.left} height=${p.bottom - p.top} /></clipPath>
        ${p.profile ? this.profile() : nothing}
        <g class="crisp" fill=${GRID}>
          ${c.times.map((_, i) => svg`<rect x=${this.x(i * c.gridEvery)} y=${axisTop} width="1" height=${p.bottom - axisTop} />`)}
          ${p.grid.map((g) => svg`<rect x=${c.left + 2} y=${Math.round(this.y(g))} width=${c.right - c.left - 2} height="1" />`)}
        </g>
        <g class="crisp">
          ${(p.rules ?? []).map((r) => svg`<rect x=${c.left} y=${Math.round(this.y(r.y))} width=${c.right - c.left} height="1" fill=${r.color} />`)}
        </g>
        ${(p.levels ?? []).map((l) => svg`${this.level(l)}<text class="level-label" x=${c.levelFrom + 2} y=${Math.round(this.y(l.y)) - 3}>${l.label}</text>`)}
        ${(p.pivots ?? []).map((v) => {
          const y = Math.round(this.y(v.y));
          return svg`<text x=${v.x} y=${y + 5} fill=${v.color}>${v.text}</text>
            ${v.drawn === false ? nothing : svg`<rect class="crisp" x=${v.from} y=${y} width=${v.to - v.from} height="1" fill=${v.color} />`}`;
        })}
        ${p.candles ? svg`<g class="crisp">${this.candles()}</g>` : nothing}
        ${p.hist ? this.histogram() : nothing}
        <g clip-path="url(#${clip})">
          ${p.series.map((s) => this.line(s))}
          <text x=${c.left + 3} y=${Math.round(this.y(p.titleY)) + 4}>${p.title}</text>
        </g>
        ${(p.levelsOver ?? []).map((l) => this.level(l))}
        ${(p.fills ?? []).map((f) => this.fillMark(f))}
        ${(p.trades ?? []).map((t) => this.trade(t))}
        ${(p.orders ?? []).map((o) => this.order(o))}
        ${p.marker
          ? svg`<g fill="none" stroke="#000"><path d="M${p.marker.x + 0.5} ${p.marker.y} v20 l15 -10 Z" /><rect x=${p.marker.x + 16.5} y=${p.marker.y + 0.5} width="3" height="20" /></g>`
          : nothing}
        ${p.copyright ? svg`<text x=${c.left + 3} y=${Math.round(this.y(p.copyright)) + 4}>© 2012 NinjaTrader, LLC</text>` : nothing}
        ${tl ? svg`<text class="end" x=${tl.x} y=${Math.round(this.y(tl.y)) + 4}>${tl.text}</text>` : nothing}
        <g class="crisp">
          <rect x=${c.left} y=${axisTop} width="1" height=${p.bottom - axisTop} />
          <rect x=${c.right} y=${axisTop} width="1" height=${p.bottom - axisTop} />
          ${first ? nothing : svg`<rect x=${c.x} y=${p.top} width=${c.width} height="1" />`}
          ${last ? svg`<rect x=${c.left} y=${p.bottom} width=${c.right - c.left + 1} height="1" />` : nothing}
          ${p.ticks.map(([v]) => svg`<rect x=${c.right} y=${Math.round(this.y(v))} width="7" height="1" />`)}
          ${(p.leftTicks ?? []).map(([v]) => svg`<rect x=${c.left - 5} y=${Math.round(this.y(v))} width="5" height="1" />`)}
          ${last ? c.times.map((_, i) => svg`<rect x=${this.x(i * c.gridEvery)} y=${p.bottom} width="1" height="7" />`) : nothing}
        </g>
        ${p.ticks.map(([v, t]) => svg`<text x=${c.right + 8} y=${Math.round(this.y(v)) + 4}>${t}</text>`)}
        ${(p.leftTicks ?? []).map(([v, t]) => svg`<text class="end" x=${c.left - 6} y=${Math.round(this.y(v)) + 4}>${t}</text>`)}
        ${last ? c.times.map((t, i) => svg`<text class="mid" x=${this.x(i * c.gridEvery)} y=${p.bottom + 17}>${t}</text>`) : nothing}
        ${p.tags.map((t) => this.tag(t))}
        ${(p.leftTags ?? []).map((t) => this.leftTag(t))}
      </svg>
      ${p.badge ? html`<button class="badge" aria-label="Fixed scale">F</button>` : nothing}
      ${first
        ? html`${c.topBadge ? html`<button class="badge top" aria-label="Fixed scale">F</button>` : nothing}
            <button class="menu" aria-label="Chart menu"><svg viewBox="0 0 9 6"><path d="M0 0h9L4.5 6z" /></svg></button>`
        : nothing}
    `;
  }
}

/* ------------------------------------------------------------ window */

const caret = svg`<path d="M0 0h6L3 3z" />`;
const candlesIcon = svg`
  <g stroke="#1a1a1a" stroke-width="1"><path d="M2.5 1v14M7.5 0v15M12.5 2v14" />
  <rect x=".5" y="3.5" width="4" height="9" rx="1" fill="#35c335" /><rect x="5.5" y="2.5" width="4" height="10" rx="1" fill="#5be05b" />
  <rect x="10.5" y="4.5" width="4" height="9" rx="1" fill="#dd2a2a" /></g>`;
const pencilIcon = svg`
  <path d="M1.5 14.5 3 10 11 2 14 5 6 13z" fill="#ffc928" stroke="#a8700c" />
  <path d="m11 2 1.5-1.2 2.7 2.7L14 5z" fill="#e9a0a0" stroke="#9b5a4a" /><path d="m1.5 14.5 1-3 2 2z" fill="#333" />
  <path d="M4.5 10.8 11.8 3.5" stroke="#fff3b0" />`;
const lens = (c: string, f: string) => svg`
  <path d="M1 15 6 9.5" stroke=${c} stroke-width="2.5" /><circle cx="8" cy="7" r="4" fill=${f} stroke=${c} />`;
const zoomInIcon = svg`${lens("#76808c", "#a9cdea")}<path d="M13 0v7M9.5 3.5h7" stroke="#12a01c" stroke-width="2" />`;
const zoomOutIcon = svg`${lens("#c4c4c4", "#e2e2e2")}<path d="M11 2.5h5" stroke="#b5b5b5" stroke-width="2" />`;
const crossIcon = svg`<path d="M8 1v5M8 10v5M1 8h5M10 8h5" stroke="#000" stroke-width="2" /><path d="M7 8h2" stroke="#777" />`;
const pageIcon = svg`
  <rect x="1.5" y=".5" width="13" height="15" fill="#f6f6f6" stroke="#777" /><path d="M3 14 6 10" stroke="#6a747e" stroke-width="2" />
  <circle cx="8.5" cy="7" r="4.5" fill="#9cc3e6" stroke="#8b98a5" /><path d="M6 5.5a3 3 0 0 1 3-2" stroke="#fff" fill="none" />`;
const traderIcon = svg`
  <path d="M3 5.5h8M3 9.5h6M7 13.5h6" stroke="#aaa" /><path d="M0 1h7l2 2-2 2H0z" fill="#2dbb2d" stroke="#158015" stroke-width=".6" />
  <path d="M0 7h5l2 2-2 2H0z" fill="#dd2a2a" stroke="#8f1010" stroke-width=".6" />
  <path d="M10.5 1v13" stroke="#157015" /><rect x="9.5" y="2.5" width="3" height="11" fill="#43cc43" stroke="#158015" />
  <rect x="13.5" y="9.5" width="2" height="6" fill="#e03535" stroke="#8f1010" />`;
const barsIcon = svg`
  <rect x=".5" y=".5" width="15" height="15" fill="#d2d2d2" stroke="#707070" /><path d="M4.5 2v12M8.5 1v13M12.5 3v12" stroke="#111" />
  <rect x="2.5" y="4.5" width="3" height="7" fill="#49d149" stroke="#114d11" /><rect x="7" y="3.5" width="3" height="7" fill="#49d149" stroke="#114d11" />
  <rect x="11" y="6.5" width="3" height="7" fill="#dd2a2a" stroke="#701010" />`;
const chartIcon = svg`
  <rect x=".5" y=".5" width="15" height="15" fill="#e4e4e4" stroke="#888" /><rect x="1" y="10" width="14" height="5" fill="#bcbcbc" />
  <path d="M2 6 5 3l2 2 3-3 4 4" stroke="#3f9a68" fill="none" /><path d="m2 9 4-3 3 2 2-2 3 2" stroke="#e04848" fill="none" />`;
const moneyIcon = svg`
  <path d="M2.5 .5h8l3 3v12h-11z" fill="#e0e0e0" stroke="#c2c2c2" /><text x="8" y="12" text-anchor="middle" font-size="11" font-weight="bold" fill="#9b9b9b">$</text>`;
const panelIcon = svg`
  <rect x="1.5" y=".5" width="13" height="15" fill="#f4f7ff" stroke="#777" /><rect x="2" y="1" width="12" height="3" fill="#5d8fe0" />
  <rect x="3.5" y="6.5" width="3" height="7" fill="#b9a8ff" stroke="#7763e0" /><path d="M8.5 7h4M8.5 10h4M8.5 13h4" stroke="#a8b4cc" />`;
const appIcon = svg`
  <rect x=".5" y=".5" width="13" height="13" fill="#f4f8ff" stroke="#8ea0c0" /><path d="M4.5 1v12M9 1v12M1 5h12M1 9.5h12" stroke="#c3cede" stroke-width=".7" />
  <path d="m1 9 3-4 3 4 3-5 3-2" stroke="#1da045" stroke-width="1.6" fill="none" /><path d="m1 4 4 4 3-4 5 3" stroke="#2058c8" stroke-width="1.4" fill="none" />`;

@customElement("chart-window")
export class ChartWindow extends LitElement {
  @property({ attribute: false }) chart!: Chart;

  static styles = css`
    :host { display: block; min-width: 0; box-sizing: border-box; background: #fff; color: #000; font: 11px "Open Sans", "Segoe UI", sans-serif; }
    button { padding: 0; margin: 0; font: inherit; color: inherit; background: none; border: 0; }
    svg { display: block; flex: none; }

    .title { display: flex; justify-content: space-between; align-items: flex-start; box-sizing: border-box; height: 30px; padding: 1px 1px 0 2px; border-bottom: 1px solid #8a8d90;
      background: radial-gradient(ellipse 130px 20px at 105px 15px, #7e7e7e, #6a6a6a 55%, rgba(80, 80, 80, 0.5) 80%, transparent), linear-gradient(90deg, #1c1e20, #000 45%, #0a0a0a 70%, #151719); }
    .title.active { height: 22px; padding: 0 3px 0 2px; border-bottom: 2px solid #e4e6e8;
      background: radial-gradient(ellipse 155px 26px at 90px 14px, #b4b8bb, rgba(140, 148, 152, 0.75) 65%, transparent), radial-gradient(ellipse 24px 14px at 262px 16px, #7da4c4, transparent),
        radial-gradient(ellipse 20px 12px at 337px 16px, #9fc0da, transparent), radial-gradient(ellipse 26px 14px at 414px 14px, #6f5a6c, transparent),
        radial-gradient(ellipse 32px 14px at 565px 14px, #1c2478, transparent), linear-gradient(90deg, #3c4146, #1b2128 34%, #11161c 60%, #05080b 75%, #10151a); }
    .name { display: flex; align-items: center; gap: 5px; height: 20px; white-space: pre; }
    .name.low { height: 28px; }
    h1 { margin: 0; font: inherit; font-size: 12px; white-space: pre; }
    .buttons { display: flex; gap: 4px; align-items: flex-start; }
    .buttons .link { box-sizing: border-box; width: 31px; height: 18px; border: 1px solid #18b8e8; border-radius: 2px; background: linear-gradient(#fff, #e6e9ec); color: #222; font-size: 11px; line-height: 14px; box-shadow: inset 0 0 0 1px #a9e4f6; }
    .caption { display: flex; box-sizing: border-box; height: 19px; border: 1px solid #888; border-top: 0; border-radius: 0 0 5px 5px; overflow: hidden; background: linear-gradient(#2c2c2c, #0c0c0c 50%, #000); }
    .caption button { display: grid; place-items: center; width: 27px; }
    .caption button + button { border-left: 1px solid #888; }
    .caption button:last-child { width: 46px; }
    .active .caption { background: linear-gradient(#a6a9ab, #77797b 45%, #3c3e40 50%, #5c5e60); }
    .active .caption button:last-child { background: linear-gradient(#dda294, #c4543c 45%, #a02410 50%, #c8502c); }

    .tools { display: flex; align-items: center; box-sizing: border-box; height: 25px; padding: 0 4px; background: linear-gradient(#fdfdfd, #f1f1f1 85%, #ebebeb); }
    .grip { width: 2px; height: 17px; margin-right: 6px; background: repeating-linear-gradient(#b5b5b5 0 2px, transparent 2px 5px); }
    .sep { width: 1px; height: 16px; background: #b0b0b0; }
    label { display: flex; align-items: center; gap: 4px; margin-left: 7px; }
    select { appearance: none; border: 0; padding: 0; margin: 0; background: none; font: inherit; color: #000; }
    .tools button { display: flex; align-items: center; gap: 3px; margin-left: 6px; }
    .tools button.on { box-sizing: border-box; width: 23px; height: 22px; justify-content: center; margin-left: 2px; border: 1px solid #3399ff; background: #edf5fc; }
    .tools button.on + button { margin-left: 4px; }
    .tools .gap { margin-left: 8px; }

    .scroll { display: flex; box-sizing: border-box; height: 22px; border-top: 1px solid #e2e2e2; background: #ececec; }
    .scroll button { display: grid; place-items: center; flex: none; width: 17px; }
    input { appearance: none; flex: 1; min-width: 0; margin: 0; height: 21px; background: none; }
    input::-webkit-slider-thumb { appearance: none; box-sizing: border-box; width: var(--thumb); height: 21px; border: 1px solid #989898; border-radius: 2px;
      background: var(--grips), linear-gradient(#f6f6f6, #e6e6e6 50%, #d2d2d2 50%, #dcdcdc); }
    .grips { --grips: repeating-linear-gradient(90deg, #777 0 1px, transparent 1px 3px) center / 8px 7px no-repeat; }
    .plain { --grips: linear-gradient(transparent, transparent); }
  `;

  private button(label: string, icon: unknown, menu = false, cls = "") {
    return html`<button class=${cls} aria-label=${label}>
      <svg width="16" height="16" viewBox="0 0 16 16">${icon}</svg>
      ${menu ? html`<svg width="6" height="3">${caret}</svg>` : nothing}
    </button>`;
  }

  render() {
    const c = this.chart;
    const ink = c.active ? "#fff" : "#e8e8e8";
    return html`
      <header class="title ${c.active ? "active" : ""}">
        <div class="name ${c.active ? "" : "low"}">
          <svg width="14" height="14">${appIcon}</svg>
          <h1>$EURUSD (${c.tick})  14/09/2012</h1>
        </div>
        <div class="buttons">
          <button class="link">L</button>
          <div class="caption">
            <button aria-label="Minimize"><svg width="12" height="12"><rect x="1" y="6" width="10" height="3" fill=${ink} /></svg></button>
            <button aria-label="Restore"><svg width="12" height="12">
              ${c.active
                ? svg`<path d="M4 1.5h6.5v6.5" fill="none" stroke=${ink} stroke-width="1.5" /><rect x="2" y="4" width="6" height="6" fill="none" stroke=${ink} stroke-width="2" />`
                : svg`<rect x="2" y="2" width="8" height="7" fill="none" stroke=${ink} stroke-width="2.5" />`}
            </svg></button>
            <button aria-label="Close"><svg width="12" height="12"><path d="m2.5 2 7 8M9.5 2l-7 8" stroke=${ink} stroke-width="2.5" /></svg></button>
          </div>
        </div>
      </header>
      <div class="tools">
        <span class="grip"></span><span class="sep"></span>
        <label><select aria-label="Instrument"><option>$EURUSD</option></select><svg width="6" height="3">${caret}</svg></label>
        <label><select aria-label="Interval"><option>${c.tick}</option></select><svg width="6" height="3">${caret}</svg></label>
        <span class="sep gap"></span>
        ${this.button("Chart style", candlesIcon, true)}
        ${this.button("Drawing tools", pencilIcon, true)}
        ${this.button("Zoom in", zoomInIcon)}
        ${this.button("Zoom out", zoomOutIcon)}
        <span class="sep gap"></span>
        ${this.button("Cross hair", crossIcon, true)}
        ${this.button("Data box", pageIcon)}
        <span class="sep gap"></span>
        ${this.button("Chart trader", traderIcon, false, "on")}
        ${this.button("Data series", barsIcon)}
        ${this.button("Indicators", chartIcon)}
        ${this.button("Strategies", moneyIcon)}
        ${this.button("Properties", panelIcon)}
      </div>
      ${c.panes.map((p, i) => html`<chart-pane .chart=${c} .pane=${p} .index=${i}></chart-pane>`)}
      <div class="scroll ${c.thumb > 20 ? "grips" : "plain"}" style="--thumb: ${c.thumb}px">
        <button aria-label="Scroll back"><svg width="4" height="8"><path d="M4 0v8L0 4z" fill="#444" /></svg></button>
        <input type="range" min="0" max="100" value="100" aria-label="Chart position" />
        <button aria-label="Scroll forward"><svg width="4" height="8"><path d="M0 0v8l4-4z" fill="#444" /></svg></button>
      </div>
    `;
  }
}

@customElement("app-root")
export class AppRoot extends LitElement {
  static styles = css`
    :host { display: block; }
    main {
      display: grid; grid-template-columns: minmax(0, 1366fr) minmax(0, 701fr) minmax(0, 699fr);
      align-items: start; min-height: 100vh; background: #000;
    }
    .main { border-bottom: 2px solid #4a6a85; }
    .mid { border: solid #26292c; border-width: 0 1px 8px 2px; border-bottom-color: #111315; }
    .side { border: solid #0c0d0e; border-width: 0 7px 8px 7px; border-left-color: #6f8296; border-bottom-color: #111315; }
  `;

  render() {
    return html`<main>
      <chart-window class="main" .chart=${chart600}></chart-window>
      <chart-window class="mid" .chart=${chart200}></chart-window>
      <chart-window class="side" .chart=${chart1800}></chart-window>
    </main>`;
  }
}
